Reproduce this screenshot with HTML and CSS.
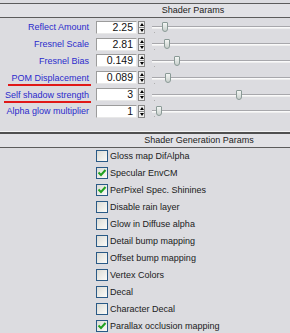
FILE: index.html
```html
<!DOCTYPE html>
<html>
<head>
<meta charset="utf-8">
<link rel="stylesheet" href="styles.css">
</head>
<body>
<div class="panel">
  <div class="header header-top"><span>Shader Params</span></div>
  <div class="params">
    <div class="row">
      <span class="label">Reflect Amount</span>
      <span class="input">2.25</span>
      <span class="spin"><i class="up"></i><i class="down"></i></span>
      <div class="slider"><div class="track"></div><div class="tick"></div><div class="thumb" style="left:16px"></div></div>
    </div>
    <div class="row">
      <span class="label">Fresnel Scale</span>
      <span class="input">2.81</span>
      <span class="spin"><i class="up"></i><i class="down"></i></span>
      <div class="slider"><div class="track"></div><div class="tick"></div><div class="thumb" style="left:18px"></div></div>
    </div>
    <div class="row">
      <span class="label">Fresnel Bias</span>
      <span class="input">0.149</span>
      <span class="spin"><i class="up"></i><i class="down"></i></span>
      <div class="slider"><div class="track"></div><div class="tick"></div><div class="thumb" style="left:28px"></div></div>
    </div>
    <div class="row">
      <span class="label"><span class="mark mark-pom">POM Displacement</span></span>
      <span class="input">0.089</span>
      <span class="spin"><i class="up"></i><i class="down"></i></span>
      <div class="slider"><div class="track"></div><div class="tick"></div><div class="thumb" style="left:19px"></div></div>
    </div>
    <div class="row">
      <span class="label"><span class="mark mark-self">Self shadow strength</span></span>
      <span class="input">3</span>
      <span class="spin"><i class="up"></i><i class="down"></i></span>
      <div class="slider"><div class="track"></div><div class="tick"></div><div class="thumb" style="left:90px"></div></div>
    </div>
    <div class="row">
      <span class="label">Alpha glow multiplier</span>
      <span class="input">1</span>
      <span class="spin"><i class="up"></i><i class="down"></i></span>
      <div class="slider"><div class="track"></div><div class="tick"></div><div class="thumb" style="left:10px"></div></div>
    </div>
  </div>
  <div class="header header-gen"><span>Shader Generation Params</span></div>
  <div class="checks">
    <div class="check"><span class="box"></span><span>Gloss map DifAlpha</span></div>
    <div class="check"><span class="box on"><svg viewBox="0 0 10 10" width="10" height="10"><path d="M1.5 4.5 L4 7 L8.5 2" fill="none" stroke="#21a121" stroke-width="2"/></svg></span><span>Specular EnvCM</span></div>
    <div class="check"><span class="box on"><svg viewBox="0 0 10 10" width="10" height="10"><path d="M1.5 4.5 L4 7 L8.5 2" fill="none" stroke="#21a121" stroke-width="2"/></svg></span><span>PerPixel Spec. Shinines</span></div>
    <div class="check"><span class="box"></span><span>Disable rain layer</span></div>
    <div class="check"><span class="box"></span><span>Glow in Diffuse alpha</span></div>
    <div class="check"><span class="box"></span><span>Detail bump mapping</span></div>
    <div class="check"><span class="box"></span><span>Offset bump mapping</span></div>
    <div class="check"><span class="box"></span><span>Vertex Colors</span></div>
    <div class="check"><span class="box"></span><span>Decal</span></div>
    <div class="check"><span class="box"></span><span>Character Decal</span></div>
    <div class="check last"><span class="box on"><svg viewBox="0 0 10 10" width="10" height="10"><path d="M1.5 4.5 L4 7 L8.5 2" fill="none" stroke="#21a121" stroke-width="2"/></svg></span><span>Parallax occlusion mapping</span></div>
  </div>
</div>
</body>
</html>
```

FILE: styles.css
```css
html, body {
  margin: 0;
  padding: 0;
}
body {
  background: #dcdce0;
  font-family: "Liberation Sans", Arial, sans-serif;
  font-size: 9px;
  color: #1e1e1e;
  width: 290px;
  height: 333px;
  overflow: hidden;
}
.panel {
  padding-top: 3px;
}
.header {
  background: #e2e2e6;
  height: 13px;
  line-height: 13px;
  border-bottom: 1px solid #5c5c5c;
  text-align: center;
  color: #222;
}
.header-top {
  border-top: 1px solid #5c5c5c;
  padding-left: 96px;
}
.header-gen {
  border-top: 2px solid #505050;
  box-shadow: 0 -1px 0 #f4f4f4;
  padding-left: 108px;
}
.params {
  padding-top: 1px;
  padding-bottom: 12px;
}
.row {
  display: grid;
  grid-template-columns: 96px 42px 7px 1fr;
  align-items: center;
  height: 16.8px;
}
.label {
  text-align: right;
  padding-right: 7px;
  color: #2b2bcc;
  white-space: nowrap;
}
.mark {
  position: relative;
}
.mark::after {
  content: "";
  position: absolute;
  bottom: -3px;
  right: -2px;
  height: 2px;
  background: #e01818;
}
.mark-pom::after { left: -3px; }
.mark-self::after { left: -1px; }
.input {
  box-sizing: border-box;
  height: 13px;
  width: 41px;
  background: #fff;
  border: 1px solid #9c9c9c;
  border-right-color: #e8e8e8;
  border-bottom-color: #e8e8e8;
  text-align: right;
  padding-right: 3px;
  font-size: 10.5px;
  line-height: 11px;
  color: #111;
}
.spin {
  display: flex;
  flex-direction: column;
  height: 13px;
  width: 7px;
}
.spin i {
  flex: 1;
  position: relative;
  background: #f0f0f0;
  border: 1px solid #8a8a8a;
  box-sizing: border-box;
}
.spin i + i { border-top: none; }
.spin i::after {
  content: "";
  position: absolute;
  left: 0.5px;
  border-left: 2.5px solid transparent;
  border-right: 2.5px solid transparent;
}
.spin .up::after { top: 1px; border-bottom: 3px solid #000; }
.spin .down::after { top: 1px; border-top: 3px solid #000; }
.slider {
  position: relative;
  height: 16px;
  margin-left: 1px;
}
.track {
  position: absolute;
  left: 6px;
  right: -4px;
  top: 7px;
  height: 1px;
  border-top: 1px solid #a8a8ac;
  background: #fafafa;
  border-bottom: 1px solid #eeeeee;
}
.tick {
  position: absolute;
  left: 8px;
  top: 13px;
  width: 1px;
  height: 1px;
  background: #b0b0b0;
}
.thumb {
  position: absolute;
  top: 3px;
  width: 6px;
  height: 10px;
  box-sizing: border-box;
  background: linear-gradient(#f4f6f4, #c8d0cc);
  border: 1px solid #8a9a96;
  border-radius: 1px 1px 3px 3px;
}
.checks {
  padding-top: 0;
}
.check {
  display: flex;
  align-items: center;
  height: 17px;
  padding-left: 96px;
  gap: 2px;
  color: #202020;
  white-space: nowrap;
}
.box {
  box-sizing: border-box;
  width: 12px;
  height: 12px;
  border: 1px solid #2a5a86;
  background: linear-gradient(135deg, #dcdcd6, #fbfbf9);
  display: flex;
  align-items: center;
  justify-content: center;
  flex: none;
}
.last span:last-child {
  position: relative;
}
.last span:last-child::after {
  content: "";
  position: absolute;
  left: -17px;
  right: -6px;
  bottom: -4px;
  height: 2px;
  background: #e01818;
}
```
